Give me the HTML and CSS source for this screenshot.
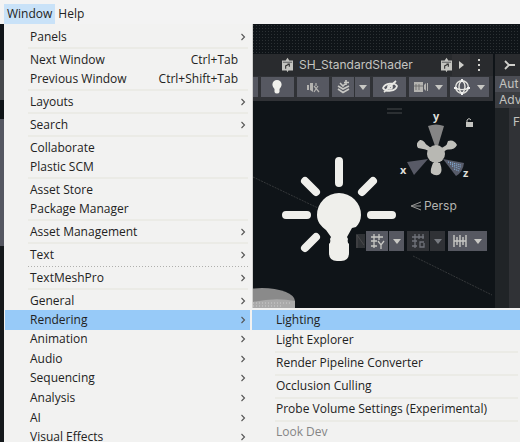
FILE: index.html
```html
<!DOCTYPE html>
<html lang="en">
<head>
<meta charset="utf-8">
<title>Editor</title>
<link rel="stylesheet" href="styles.css">
</head>
<body>
<svg class="defs" aria-hidden="true">
  <symbol id="chevron" viewBox="0 0 6 8"><path d="M1.5 1 4.5 4l-3 3" fill="none" stroke="#555" stroke-width="1.1"/></symbol>
  <symbol id="down" viewBox="0 0 8 5"><path d="M0 0h8L4 5z" fill="currentColor"/></symbol>
  <symbol id="asset" viewBox="0 0 12 16"><path d="M0 3h4l2-3 2 3h4v11H7l-1 2-1-2H0z" fill="#c4c4c0"/><path d="M1 5h10" stroke="#55565a"/><path d="M4 12V9l4-2M6 7h2v3" stroke="#333" stroke-width="1.2" fill="none"/></symbol>
</svg>
<nav class="menubar">
  <button class="menubar-item open">Window</button>
  <button class="menubar-item">Help</button>
</nav>
<main class="stage">
  <div class="editor">
    <section class="scene">
      <div class="tabs">
        <svg class="asset"><use href="#asset"/></svg>
        <span class="tab-title">SH_StandardShader</span>
        <svg class="asset"><use href="#asset"/></svg>
        <button class="tab-next" aria-label="Next tab"><svg width="5" height="8"><path d="M0 0 5 4 0 8z" fill="#d0d0cc"/></svg></button>
        <button class="tab-more" aria-label="Options"><svg width="3" height="12"><path d="M0 0h2v2H0zM0 5h2v2H0zM0 10h2v2H0z" fill="#d0d0cc"/></svg></button>
      </div>
      <div class="tools">
        <button class="tool stub" aria-label="View mode"></button>
        <button class="tool" aria-label="Lighting"><svg width="12" height="16"><path d="M6 1a4.6 4.6 0 0 1 4.6 4.6C10.6 8 9 9 8.5 10v3Q8 14.500 6 14.500T3.500 13v-3C3 9 1.400 8 1.400 5.600A4.600 4.600 0 0 1 6 1z" fill="#f0f0ec"/></svg></button>
        <button class="tool" aria-label="Audio"><svg width="14" height="14" fill="#b4b3b0"><path d="M1 5h2v5H1zM4 3h3v9L4 10z"/><path d="M8 6l5 6M12 6l-4 6M10 3v3" stroke="#b4b3b0" stroke-width="1.2"/></svg></button>
        <span class="split">
          <button class="tool part" aria-label="Effects"><svg width="13" height="14" fill="none" stroke="#c8c8c4" stroke-width="1.6"><path d="M1 6l5 3 6-3M1 9l5 3.5L12 9M3 3l3 3 2-2M9 0v5M7 2.500h5"/></svg></button>
          <button class="tool arrow" aria-label="Effects options"><svg class="down"><use href="#down"/></svg></button>
        </span>
        <button class="tool" aria-label="Hidden objects"><svg width="16" height="14" fill="none" stroke="#e8e8e4" stroke-width="1.7"><path d="M1 8c2-5 12-6 14-2-1 5-11 7-14 2zM2 12 14 1"/><circle cx="8" cy="7" r="2"/></svg></button>
        <button class="tool wide" aria-label="Camera"><svg width="14" height="10" fill="#b4b3b0"><path d="M0 0h9v10H0zM10 3l2-2v8l-2-2zM13 1h1v8h-1z"/><path d="M2 2v6M5 2v6M0 4h9" stroke="#666" stroke-width=".8"/></svg><svg class="down"><use href="#down"/></svg></button>
        <button class="tool wide" aria-label="Gizmos"><svg width="16" height="16" fill="none" stroke="#e4e4e0" stroke-width="1.4"><circle cx="8" cy="8" r="6.3"/><path d="M8 1c-4 4-4 10 0 14M8 1c4 4 4 10 0 14M1 9c4 2 10 2 14 0"/><path d="M7 0h2v3H7zM0 8h3v2H0zM13 8h3v2h-3zM7 13h2v3H7z" fill="#f0f0f0" stroke="none"/></svg><svg class="down"><use href="#down"/></svg></button>
      </div>
      <div class="viewport">
        <svg class="canvas" viewBox="253 101 240 207" width="240" height="207" role="img" aria-label="Scene with a light gizmo">
          <path d="M253 177 318 208M413 256 492 295" stroke="#35383a" stroke-dasharray="2 1"/>
          <path d="M387 109h15M387 113h15" stroke="#36383b" stroke-width="1.5"/>
          <ellipse cx="262" cy="301" rx="33" ry="13" fill="#8a8a8a"/>
          <path d="M253 302q22-5 42-1v7h-42z" fill="#aaa"/>
          <path d="M253 303h39M253 306h30" stroke="#ccc" stroke-dasharray="1 2"/>
          <path d="M339 193a22 22 0 0 1 22 22c0 5-2 9-5 12l-4 1-5 9 1 2q-1 3 1 5v9q0 8-8 8h-4q-8 0-8-8v-9q2-2 1-5l1-2-5-7c-5-4-9-8-9-15a22 22 0 0 1 22-22z" fill="#efefeb"/>
          <path d="M339 161v22M286 215h21M371 215h21M305 181l11 11M373 181l-11 11M316 237l-11 11" stroke="#efefeb" stroke-width="8" stroke-linecap="round"/>
          <path d="M356 234h9v14h-9z" fill="#303336"/><path d="M357 248v-13l7 10" stroke="#4a4a4c" fill="none"/>
          <path d="M436 154 422 144M436 154 452 144M436 154v17" stroke="#bdbdb8" stroke-width="4"/>
          <path d="M418 148q-3-5 2-8 5-1 8 10zM448 141q6-2 9 4-3 6-12 4zM433 163h7q3 8 0 11-4 3-9-1-1-3 2-10z" fill="#c0c0bb"/>
          <path d="M428 126q8-3 16 0l-6 20h-3z" fill="#858585"/>
          <path d="M407 162 428 159 414 175z" fill="#585a66"/>
          <path d="M443 159l21 4q-1 9-8 13z" fill="#585c6a"/>
          <path d="M448 162l13 3M450 164l11 3M452 166l8 3M454 169l5 2" stroke="#8cbcec" stroke-dasharray="1 1"/>
          <circle cx="436" cy="154" r="9" fill="#b8b8b3"/>
          <path d="M466 122h7v5h-7z" fill="#c4c4c0"/><path d="M467 122v-2q2-3 4 0" stroke="#c4c4c0" fill="none"/>
          <path d="M421 202l-10 4 10 4M421 206h-9" stroke="#9b9b99" fill="none"/>
          <text class="axis" x="433" y="120">y</text>
          <text class="axis" x="400" y="174">x</text>
          <text class="axis" x="463" y="177">z</text>
          <text class="persp" x="424" y="210">Persp</text>
        </svg>
        <div class="snap">
          <span class="split">
            <button class="tool snap-main" aria-label="Grid axis"><svg width="15" height="15" fill="none" stroke="#c8c8c4" stroke-width="1.3"><path d="M4 0v14M9 0v6M1 3h12M1 7h6M1 12h6M8 7l3 4 3-4M11 11v4"/></svg></button>
            <button class="tool arrow" aria-label="Grid options"><svg class="down"><use href="#down"/></svg></button>
          </span>
          <span class="split dim">
            <button class="tool snap-main" aria-label="Grid snapping" disabled><svg width="15" height="15" fill="none" stroke="#70737b" stroke-width="1.3"><path d="M4 0v14M8 0v5M12 0v5M1 3h12M1 7h5M1 12h5M13 8H9v5h4V9"/></svg></button>
            <button class="tool arrow" aria-label="Snapping options" disabled><svg class="down"><use href="#down"/></svg></button>
          </span>
          <button class="tool wide" aria-label="Snap increment"><svg width="14" height="14" fill="none" stroke="#c8c8c4" stroke-width="1.4"><path d="M1 1v12M4 3v8M7 1v12M10 3v8M13 1v12M1 7h12"/></svg><svg class="down"><use href="#down"/></svg></button>
        </div>
      </div>
    </section>
    <aside class="inspector">
      <div class="inspector-tab"><svg width="11" height="10" fill="none" stroke="#d0d0cc" stroke-width="1.8"><path d="M1 1l4 4-4 4M5 5h6"/></svg></div>
      <div class="inspector-row auto">Aut</div>
      <div class="inspector-row">Adv</div>
      <div class="inspector-body">F</div>
    </aside>
  </div>

  <div class="menu window-menu" role="menu" aria-label="Window">
    <button role="menuitem">Panels<svg class="chev"><use href="#chevron"/></svg></button>
    <hr>
    <button role="menuitem">Next Window<kbd>Ctrl+Tab</kbd></button>
    <button role="menuitem">Previous Window<kbd>Ctrl+Shift+Tab</kbd></button>
    <hr>
    <button role="menuitem">Layouts<svg class="chev"><use href="#chevron"/></svg></button>
    <hr>
    <button role="menuitem">Search<svg class="chev"><use href="#chevron"/></svg></button>
    <hr>
    <button role="menuitem">Collaborate</button>
    <button role="menuitem">Plastic SCM</button>
    <hr>
    <button role="menuitem">Asset Store</button>
    <button role="menuitem">Package Manager</button>
    <hr>
    <button role="menuitem">Asset Management<svg class="chev"><use href="#chevron"/></svg></button>
    <hr>
    <button role="menuitem">Text<svg class="chev"><use href="#chevron"/></svg></button>
    <hr class="dotted">
    <button role="menuitem">TextMeshPro<svg class="chev"><use href="#chevron"/></svg></button>
    <hr>
    <button role="menuitem">General<svg class="chev"><use href="#chevron"/></svg></button>
    <div class="group">
      <button role="menuitem" class="active">Rendering<svg class="chev"><use href="#chevron"/></svg></button>
      <button role="menuitem">Animation<svg class="chev"><use href="#chevron"/></svg></button>
      <button role="menuitem">Audio<svg class="chev"><use href="#chevron"/></svg></button>
      <button role="menuitem">Sequencing<svg class="chev"><use href="#chevron"/></svg></button>
      <button role="menuitem">Analysis<svg class="chev"><use href="#chevron"/></svg></button>
      <button role="menuitem">AI<svg class="chev"><use href="#chevron"/></svg></button>
      <button role="menuitem">Visual Effects<svg class="chev"><use href="#chevron"/></svg></button>
    </div>
  </div>

  <div class="menu submenu" role="menu" aria-label="Rendering">
    <button role="menuitem" class="active">Lighting</button>
    <button role="menuitem">Light Explorer</button>
    <hr>
    <button role="menuitem">Render Pipeline Converter</button>
    <hr>
    <button role="menuitem">Occlusion Culling</button>
    <hr>
    <button role="menuitem">Probe Volume Settings (Experimental)</button>
    <hr>
    <button role="menuitem" disabled>Look Dev</button>
  </div>
</main>
</body>
</html>
```
FILE: styles.css
```css
* { box-sizing: border-box; }

body {
  margin: 0;
  height: 100vh;
  display: flex;
  flex-direction: column;
  overflow: hidden;
  background: #f3f3f3;
  color: #222;
  font: 12px/18px "Open Sans", "Noto Sans", sans-serif;
}

button {
  margin: 0;
  padding: 0;
  border: 0;
  background: none;
  color: inherit;
  font: inherit;
}

svg { display: block; flex: none; }
.defs { position: absolute; width: 0; height: 0; }

.menubar {
  display: flex;
  height: 24px;
  padding: 4px 4px 0;
}
.menubar-item { padding: 0 3px; line-height: 20px; }
.menubar-item.open { background: #c9e2f8; }

.stage {
  position: relative;
  flex: 1;
  overflow: hidden;
  background: #0f1418;
}

/* Editor behind the menus */
.editor {
  display: flex;
  height: 100%;
  padding: 30px 0 0 253px;
  color: #c4c4c0;
  background:
    linear-gradient(#111519 0 36px, #46484c 36px 76px, #0f1418 76px 95px, #555761 95px 222px, #15191c 222px) 0 0 / 4px 100% no-repeat,
    radial-gradient(circle, #2c3134 0 1px, transparent 1px) 0 0 / 3px 3px,
    #0f1418;
}
.scene {
  flex: 1;
  min-width: 0;
  display: flex;
  flex-direction: column;
}
.tabs {
  display: flex;
  align-items: center;
  height: 22px;
  padding-left: 29px;
  background: #292b2e;
}
.asset { width: 11px; height: 16px; }
.tab-title { flex: 1; padding-left: 6px; font: 12px/20px Inter, sans-serif; }
.tab-next {
  display: flex;
  align-items: center;
  justify-content: center;
  width: 18px;
  height: 22px;
  background: #303134;
}
.tab-more { margin: 0 12px 0 8px; }

.tools {
  display: flex;
  gap: 3px;
  height: 25px;
  padding: 1px 4px 4px 0;
  background: #303236;
}
.tool {
  display: flex;
  align-items: center;
  justify-content: center;
  width: 33px;
  height: 20px;
  background: #565861;
  color: #c8c8c4;
}
.tool.stub { width: 5px; }
.tool.part { width: 22px; }
.tool.arrow { width: 15px; }
.tool.wide { width: 39px; gap: 7px; }
.down { width: 8px; height: 5px; }
.split { display: flex; gap: 1px; }

.viewport {
  position: relative;
  flex: 1;
  overflow: hidden;
  background: #0f1418;
}
.axis { fill: #deded9; font: bold 11px "Open Sans", sans-serif; }
.persp { fill: #b5b5b1; font: 12px Inter, sans-serif; }
.snap {
  position: absolute;
  top: 130px;
  right: 6px;
  display: flex;
  gap: 3px;
}
.tool.snap-main { width: 22px; }
.dim .tool { background: #303236; color: #777a80; }

.inspector {
  width: 27px;
  overflow: hidden;
  background: linear-gradient(90deg, #202427 0 14px, #303236 14px);
  border-left: 2px solid #0f1418;
  font: 12px/16px Inter, sans-serif;
}
.inspector-tab {
  display: flex;
  align-items: center;
  height: 22px;
  padding-left: 9px;
  background: #292b2e;
}
.inspector-row { padding-left: 4px; background: #3a3c40; }
.inspector-row.auto { background: #4b4d54; }
.inspector-body { padding: 6px 0 0 18px; }

/* Menus */
.menu {
  position: absolute;
  display: flex;
  flex-direction: column;
  background: #f2f2f1;
}
.menu button {
  display: flex;
  align-items: center;
  justify-content: space-between;
  flex: none;
  height: 19px;
  text-align: left;
  white-space: nowrap;
}
.menu .active { background: #97caf8; }
.menu button:disabled { color: #858585; }
.menu hr {
  flex: none;
  height: 4px;
  margin: 0 2px 0 23px;
  border: 0;
  background: linear-gradient(transparent 1px, #ebebe6 1px 3px, transparent 3px);
}
.menu hr.dotted {
  background: repeating-linear-gradient(90deg, #b0b0ad 0 1px, transparent 1px 3px) 0 2px / 100% 1px no-repeat;
}
.menu kbd { margin-right: 8px; font: inherit; }
.chev { width: 6px; height: 8px; }

.window-menu {
  top: 0;
  bottom: -5px;
  left: 4px;
  width: 249px;
  padding: 3px 2px 0 1px;
  border-right: 1px solid #d0d0ce;
}
.window-menu button { padding: 0 4px 0 25px; }
.group {
  flex: 1;
  display: grid;
  grid-auto-rows: 1fr;
}
.group button { height: auto; }

.submenu {
  top: 284px;
  right: 0;
  bottom: 0;
  left: 252px;
  padding-top: 2px;
}
.submenu button { height: 20px; padding-left: 24px; }
.submenu hr { height: 3px; }
```
